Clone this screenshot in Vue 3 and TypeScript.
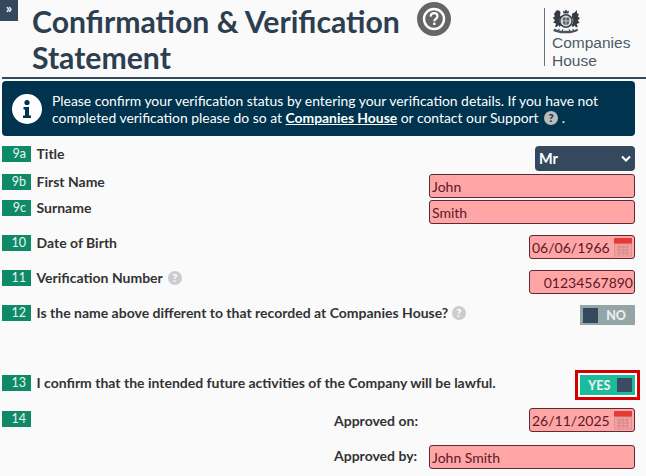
<script setup lang="ts">
interface Row { n: string; label: string }
const title: Row = { n: '9a', label: 'Title' }
const first: Row = { n: '9b', label: 'First Name' }
const surname: Row = { n: '9c', label: 'Surname' }
</script>

<template>
  <div class="page">
    <button class="side-toggle" type="button">»</button>
    <header class="head">
      <h1 class="title">
        Confirmation &amp; Verification
        <svg class="help-big" viewBox="0 0 34 34" aria-hidden="true">
          <circle cx="17" cy="17" r="17" fill="#666" />
          <circle cx="17" cy="17" r="10" fill="none" stroke="#fff" stroke-width="2.4" />
          <path d="M13.600 14.600c.2-2.200 1.600-3.400 3.500-3.400 2 0 3.400 1.200 3.400 3 0 1.400-.8 2.100-1.800 2.800-.9.6-1.300 1-1.300 2.200" fill="none" stroke="#fff" stroke-width="2.200" />
          <rect x="16.100" y="20.600" width="2.400" height="2.400" fill="#fff" />
        </svg>
        <br />Statement
      </h1>
      <div class="brand">
        <svg class="crest" viewBox="0 0 28 25" aria-hidden="true">
          <path d="M11.500 4.500l-.5-3 1.500 1 1.500-2 1.500 2 1.500-1-.5 3z" fill="#39414a" />
          <path d="M13 6h2v1.500h-2z" fill="#39414a" />
          <circle cx="14" cy="12" r="6.200" fill="#d9dbdd" stroke="#39414a" stroke-width="1.500" />
          <path d="M10.800 8.500h6.400v4.500c0 1.800-1.600 2.800-3.200 3.300-1.600-.5-3.200-1.500-3.200-3.300z" fill="#59616a" />
          <path d="M14 8.500v7.800M10.800 12h6.400" stroke="#d9dbdd" stroke-width=".8" />
          <path d="M4.500 1.500c2.300-.6 4 .6 4 2.500l-.5 2.200 1 1.800-1.700 3 .6 3 1.300 2.300-1.600 1.600-1.300-2-1.400 2.100-2-.4 1.300-2.800-3-1.200 1.800-2.400L.8 8.700l2-1.300-.8-2.600z" fill="#333b44" />
          <path d="M24.500 .8l-1.600 2.700c-1.700 0-2.900 1.100-2.900 2.700l-.2 2 1.600 2.800-.6 3.200-1.300 2.400 1.600 1.600 1.300-2 1.500 2 2-.5-1.300-2.700 3-1.300-1.800-2.300 2.100-2.400-2-1.300 1-2.700-1.700-.6z" fill="#333b44" />
          <path d="M2.500 19.500c2.500 1.800 5 1.700 7 2.300h9c2-.6 4.500-.5 7-2.300l.3 2.200c-2.400 1.900-5.200 1.600-7.300 2.500h-10c-2.100-.9-4.900-.6-7.300-2.500z" fill="#4c545d" />
          <path d="M6 21.800l1.500-2M10 22.500l1-2.200M18 22.500l-1-2.200M22 21.800l-1.500-2" stroke="#39414a" stroke-width="1" />
        </svg>
        <div class="brand-name">Companies<br />House</div>
      </div>
    </header>

    <div class="notice">
      <svg class="notice-icon" viewBox="0 0 30 30" aria-hidden="true">
        <circle cx="15" cy="15" r="15" fill="#fff" />
        <circle cx="15" cy="8.500" r="2.600" fill="#00334e" />
        <path d="M11.500 13h5.500v8.500h2V24h-8v-2.500h2v-6h-1.500z" fill="#00334e" />
      </svg>
      <p class="notice-text">
        Please confirm your verification status by entering your verification details. If you have not<br />
        completed verification please do so at <a class="notice-link">Companies House</a> or contact our Support
        <span class="q q-notice">?</span> .
      </p>
    </div>

    <section class="form">
      <div class="row row-title">
        <span class="badge">{{ title.n }}</span>
        <label class="label">{{ title.label }}</label>
        <div class="select">Mr
          <svg class="chev" viewBox="0 0 10 7" aria-hidden="true"><path d="M1 1.500l4 4 4-4" fill="none" stroke="#fff" stroke-width="2" /></svg>
        </div>
      </div>
      <div class="row row-first">
        <span class="badge">{{ first.n }}</span>
        <label class="label">{{ first.label }}</label>
        <div class="field wide">John</div>
      </div>
      <div class="row row-sur">
        <span class="badge">{{ surname.n }}</span>
        <label class="label">{{ surname.label }}</label>
        <div class="field wide">Smith</div>
      </div>
      <div class="row row-std">
        <span class="badge">10</span>
        <label class="label">Date of Birth</label>
        <div class="field short">06/06/1966
          <svg class="cal" viewBox="0 0 18 20" aria-hidden="true">
            <rect x="0" y="1" width="18" height="6" rx="1" fill="#e53935" />
            <rect x="0.500" y="7" width="17" height="12" fill="#f4a0a0" stroke="#e09090" />
            <path d="M3 10h12M3 13h12M3 16h12M5 8v10M9 8v10M13 8v10" stroke="#cf8a8a" stroke-width="1" />
          </svg>
        </div>
      </div>
      <div class="row row-std">
        <span class="badge">11</span>
        <label class="label">Verification Number <span class="q">?</span></label>
        <div class="field short num">01234567890</div>
      </div>
      <div class="row row-12">
        <span class="badge">12</span>
        <label class="label">Is the name above different to that recorded at Companies House? <span class="q q-tight">?</span></label>
        <div class="toggle off"><span class="knob"></span><span class="toggle-text">NO</span></div>
      </div>
      <div class="row row-13">
        <span class="badge">13</span>
        <label class="label">I confirm that the intended future activities of the Company will be lawful.</label>
        <div class="toggle on"><span class="toggle-text">YES</span><span class="knob"></span></div>
      </div>
      <div class="row row-14">
        <span class="badge badge-14">14</span>
        <div class="approvals">
          <div class="approve approve-on">
            <span class="label approve-label">Approved on:</span>
            <div class="field short">26/11/2025
              <svg class="cal" viewBox="0 0 18 20" aria-hidden="true">
                <rect x="0" y="1" width="18" height="6" rx="1" fill="#e53935" />
                <rect x="0.500" y="7" width="17" height="12" fill="#f4a0a0" stroke="#e09090" />
                <path d="M3 10h12M3 13h12M3 16h12M5 8v10M9 8v10M13 8v10" stroke="#cf8a8a" stroke-width="1" />
              </svg>
            </div>
          </div>
          <div class="approve">
            <span class="label approve-label by">Approved by:</span>
            <div class="field wide">John Smith</div>
          </div>
        </div>
      </div>
    </section>
  </div>
</template>

<style>
html, body { margin: 0; background: #fafafa; }
</style>

<style scoped>
.page {
  position: relative;
  width: 646px;
  height: 476px;
  overflow: hidden;
  background: #fafafa;
  font-family: Lato, "Open Sans", sans-serif;
  color: #333;
}
.side-toggle {
  position: absolute;
  left: 0;
  top: 0;
  width: 18px;
  height: 21px;
  padding: 0 0 6px;
  border: 0;
  background: #34495e;
  color: #fff;
  font: 700 14px/14px Lato, sans-serif;
}
.head {
  display: flex;
  justify-content: space-between;
  height: 77px;
  margin-left: 2px;
  padding-left: 30px;
  border-bottom: 2px solid #34495e;
}
.title {
  margin: 0;
  padding-top: 2px;
  font-size: 30.200px;
  line-height: 36px;
  font-weight: 700;
  color: #2c3e50;
  white-space: nowrap;
}
.help-big {
  width: 34px;
  height: 34px;
  margin-left: 10px;
  vertical-align: -3px;
}
.brand {
  position: relative;
  width: 102px;
  height: 58px;
  margin-top: 8px;
  border-left: 1.500px solid #69727a;
  box-sizing: border-box;
  padding-left: 7px;
}
.crest { display: block; width: 28px; height: 25px; margin-top: 1px; }
.brand-name {
  font: 400 15.500px/17.500px "Liberation Sans", Arial, sans-serif;
  color: #4d5a66;
}
.notice {
  display: flex;
  align-items: center;
  gap: 10px;
  width: 633px;
  height: 55px;
  margin: 2px 0 0 2px;
  padding-left: 10px;
  box-sizing: border-box;
  background: #00334e;
  border-radius: 4px;
  color: #fff;
}
.notice-icon { width: 30px; height: 30px; flex: none; }
.notice-text {
  margin: 0;
  font-size: 13.900px;
  line-height: 17px;
  white-space: nowrap;
}
.notice-link { font-weight: 700; text-decoration: underline; color: #fff; }
.q {
  display: inline-block;
  width: 14px;
  height: 14px;
  border-radius: 50%;
  background: #ccc;
  color: #fff;
  font-size: 11px;
  font-weight: 900;
  line-height: 14px;
  text-align: center;
  vertical-align: 1px;
  margin-left: 2px;
}
.q-tight { margin-left: 0; }
.q-notice { background: #bbb; color: #00334e; }
.form { padding: 10px 11px 0 2px; }
.row {
  display: flex;
  align-items: flex-start;
}
.row-first { margin-top: 3px; }
.row-sur { margin-top: 2px; }
.row-std { margin-top: 11px; }
.row-12 { margin-top: 11px; height: 20px; }
.row-13 { margin-top: 50px; height: 33px; }
.badge {
  flex: none;
  width: 29px;
  height: 16px;
  box-sizing: border-box;
  padding-right: 5px;
  background: #0e8a66;
  color: #e9f7f2;
  font-size: 12.500px;
  line-height: 16px;
  text-align: right;
}
.label {
  margin-left: 5.500px;
  font-size: 14px;
  font-weight: 700;
  line-height: 16px;
  color: #333;
  white-space: nowrap;
}
.select {
  position: relative;
  margin-left: auto;
  width: 100px;
  height: 25px;
  box-sizing: border-box;
  padding-left: 4px;
  border-radius: 4px;
  background: #34495e;
  color: #fff;
  font-size: 14.500px;
  font-weight: 700;
  line-height: 25px;
}
.chev { position: absolute; right: 4px; top: 9px; width: 10px; height: 7px; }
.field {
  position: relative;
  margin-left: auto;
  height: 24px;
  box-sizing: border-box;
  padding: 0 2px;
  background: #ffa5a5;
  border: 1px solid #5f2a38;
  border-radius: 3px;
  color: #5a1a28;
  font-size: 14px;
  line-height: 23px;
}
.wide { width: 206px; }
.short { width: 106px; }
.num { text-align: right; padding-right: 1px; }
.cal { position: absolute; right: 2px; top: 1px; width: 18px; height: 20px; }
.toggle {
  display: flex;
  align-items: center;
  justify-content: space-between;
  margin-left: auto;
  width: 55px;
  height: 20px;
  box-sizing: border-box;
  padding: 0 0 0 3px;
  color: #e9eeee;
  font-size: 12.500px;
  font-weight: 900;
}
.toggle.off { background: #95a5a6; }
.toggle.on {
  background: #1abc9c;
  padding: 0 3px 0 8px;
  box-shadow: 0 0 0 2px #fff, 0 0 0 5px #d40000;
}
.knob { width: 15px; height: 15px; background: #34495e; }
.toggle.on .knob { background: #3d4a66; height: 14px; }
.off .toggle-text { margin-right: 9px; }
.row-14 { position: relative; height: 68px; }
.badge-14 { margin-top: 3px; }
.approvals {
  flex: 1;
  display: flex;
  flex-direction: column;
  gap: 13px;
}
.approve {
  display: flex;
  align-items: center;
  height: 24px;
}
.approve-label {
  margin-left: 303px;
  margin-top: 2px;
}
.approve-label.by { margin-top: -2px; }
</style>
